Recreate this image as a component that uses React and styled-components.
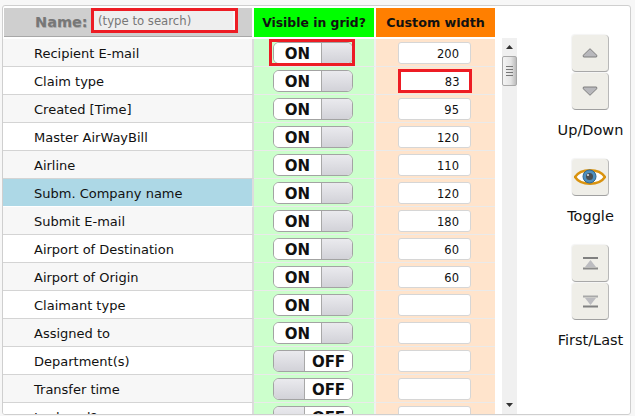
import React from "react";
import styled, { createGlobalStyle } from "styled-components";

const Global = createGlobalStyle`
  html, body { margin: 0; padding: 0; background: #fff; overflow: hidden; }
  body { font-family: "DejaVu Sans", Verdana, sans-serif; }
`;
const Page = styled.div`
  width: 635px; height: 416px; box-sizing: border-box; padding-top: 5px; overflow: hidden; background: #f7f7f7;
`;
const Panel = styled.div`
  width: 629px; height: 410px; margin-left: 2px; box-sizing: border-box;
  border: 1px solid #cfcfcf; border-radius: 3px; display: flex; overflow: hidden; background: #fff;
`;
const Main = styled.div`
  width: 492px; padding-top: 2px; flex: none;
`;
const HeaderRow = styled.div`
  display: grid; grid-template-columns: 248px 120px 119px; column-gap: 2px; height: 28px; margin: 0 0 3px 1px;
`;
const NameHead = styled.div`
  background: #cfcfcf; border-bottom: 1px solid #a8a8a8; box-sizing: border-box; display: flex; align-items: flex-start; padding-left: 31px;
`;
const NameLabel = styled.span`
  font: bold 14.5px/28px "DejaVu Sans", sans-serif; color: #777; text-shadow: 0.5px 0.5px 0 #aaa;
`;
const Search = styled.div`
  width: 147px; height: 25px; margin: 0 14px 0 auto; box-sizing: border-box; border: 3px solid #ed1c24; background: #eee;
  box-shadow: inset -2px 0 0 #f8f8f8;
  color: #777; font-size: 11.7px; line-height: 21px; padding-left: 4px;
`;
const ColHead = styled.div`
  background: ${p => p.$bg}; color: #111; font: bold ${p => p.$fs}/29px "DejaVu Sans", sans-serif; text-align: center;
`;
const Row = styled.div`
  display: grid; grid-template-columns: 251px 122px 119px; grid-template-rows: 28px; height: 28px; box-sizing: border-box;
`;
const NameCell = styled.div`
  background: ${p => p.$sel ? "#add8e6" : p.$alt ? "#f7f7f7" : "#fff"};
  border-bottom: 1px solid ${p => p.$sel ? "#fff" : "#d4d4d4"};
  border-right: 2px solid #dcdcdc; box-sizing: border-box;
  font-size: 13px; line-height: 25px; padding: 2px 0 0 31px; color: #111; white-space: nowrap;
`;
const ToggleCell = styled.div`
  background: #ccffcc; border-bottom: 1px solid #eaeaea; border-right: 2px solid #f0f0f0; box-sizing: border-box;
  display: flex; align-items: center; justify-content: center; padding-right: 2px;
`;
const WidthCell = styled.div`
  background: #ffe4cc; border-bottom: 1px solid #eaeaea; box-sizing: border-box;
  display: flex; align-items: center; justify-content: center; padding-right: 2px;
`;
const Switch = styled.div`
  position: relative; width: 80px; height: 22px; box-sizing: border-box; border: 1px solid #a3a3a3; border-radius: 6px;
  background: #fff; display: flex; flex-direction: ${p => p.$on ? "row" : "row-reverse"};
`;
const SwitchText = styled.div`
  width: 47px; text-align: center; font: bold 15px/22px "DejaVu Sans", sans-serif; color: #111; flex: none;
  height: 20px; background: #fff; border-radius: 5px;
`;
const SwitchKnob = styled.div`
  flex: 1; background: linear-gradient(#eaeaee, #d2d2d8);
  ${p => p.$on ? "border-left: 1px solid #a8a8a8; border-radius: 0 5px 5px 0;" : "border-right: 1px solid #a8a8a8; border-radius: 5px 0 0 5px;"}
`;
const Highlight = styled.div`
  position: absolute; left: -5px; top: -4px; width: 86px; height: 27px; box-sizing: border-box; border: 3px solid #ed1c24; pointer-events: none;
`;
const NumBox = styled.div`
  width: ${p => p.$hl ? "74px" : "73px"}; height: ${p => p.$hl ? "24px" : "22px"}; margin-top: ${p => p.$hl ? "1px" : 0}; box-sizing: border-box; background: #fff;
  border: ${p => p.$hl ? "3px solid #ed1c24" : "1px solid #d6d6d6"}; border-radius: ${p => p.$hl ? 0 : "3px"};
  font-size: 11.5px; line-height: ${p => p.$hl ? "20px" : "22px"}; text-align: right; padding-right: ${p => p.$hl ? "9px" : "11px"}; color: #111;
`;
const Scrollbar = styled.div`
  width: 15px; margin: 32px 0 0 7px; height: 376px; background: #f0f0f0; flex: none;
  display: flex; flex-direction: column; align-items: center;
`;
const ArrowBtn = styled.div`
  height: 18px; width: 100%; display: flex; align-items: center; justify-content: center; flex: none;
`;
const Thumb = styled.div`
  width: 15px; height: 30px; box-sizing: border-box; border: 1px solid #a9a9a9; border-radius: 2px;
  background: linear-gradient(90deg, #f4f4f4, #e4e4e4 60%, #bcbcbc); display: flex; flex-direction: column;
  align-items: center; justify-content: center; gap: 2px; flex: none;
`;
const Grip = styled.i`
  display: block; width: 7px; height: 1px; background: #777;
`;
const Track = styled.div`
  flex: 1;
`;
const Side = styled.div`
  flex: 1; display: flex; flex-direction: column; align-items: center; padding: 29px 0 0 34px;
`;
const BtnStack = styled.div`
  display: flex; flex-direction: column; gap: 1px;
`;
const ToolBtn = styled.div`
  width: 37px; height: 37px; box-sizing: border-box; background: #efeee8; border-radius: 4px;
  border-right: 1px solid #b8b8b8; border-bottom: 1px solid #a0a0a0;
  box-shadow: -1px -1px 1px #f4f4f4; display: flex; align-items: center; justify-content: center;
`;
const SideLabel = styled.div`
  font-size: 14.5px; color: #111; line-height: 16px; margin: 12px 0 21px; white-space: nowrap;
`;

const data = [
  ["Recipient E-mail", true, "200"], ["Claim type", true, "83"], ["Created [Time]", true, "95"],
  ["Master AirWayBill", true, "120"], ["Airline", true, "110"], ["Subm. Company name", true, "120"],
  ["Submit E-mail", true, "180"], ["Airport of Destination", true, "60"], ["Airport of Origin", true, "60"],
  ["Claimant type", true, ""], ["Assigned to", true, ""], ["Department(s)", false, ""],
  ["Transfer time", false, ""], ["Is closed?", false, ""],
];

const Up = () => <svg width="16" height="10" viewBox="0 0 16 10"><path d="M8 .7 15 7.5 14.5 9h-13L1 7.5Z" fill="#b8b8bc" stroke="#7e7e7e" strokeWidth="1" /></svg>;
const Down = () => <svg width="16" height="10" viewBox="0 0 16 10"><path d="M8 9.3 15 2.5 14.5 1h-13L1 2.5Z" fill="#b8b8bc" stroke="#7e7e7e" strokeWidth="1" /></svg>;
const First = () => <svg width="15" height="13" viewBox="0 0 15 13"><path d="M0 0H15V2H0Z" fill="#808080" /><path d="M7.5 3 13 10H2Z" fill="#bcbcc0" /><path d="M0 10.5H15V12.5H0Z" fill="#8a8a8a" /></svg>;
const Last = () => <svg width="15" height="13" viewBox="0 0 15 13"><path d="M0 .5H15V2.5H0Z" fill="#a8a8a8" /><path d="M7.5 10 13 3H2Z" fill="#bcbcc0" /><path d="M0 10.5H15V12.5H0Z" fill="#808080" /></svg>;
const Eye = () => (
  <svg width="32" height="20" viewBox="0 0 32 20">
    <path d="M1 10C7 1 25 1 31 10 25 19 7 19 1 10Z" fill="#fff" stroke="#d9930f" strokeWidth="2.4" />
    <circle cx="15.5" cy="9.5" r="6.5" fill="#4f8fbd" stroke="#2f6690" />
    <circle cx="15.5" cy="9.5" r="3.5" fill="#4a4f52" />
    <circle cx="14" cy="8" r="1.1" fill="#ddd" />
  </svg>
);

export default function App() {
  return (
    <Page>
      <Global />
      <Panel>
        <Main>
          <HeaderRow>
            <NameHead><NameLabel>Name:</NameLabel><Search>(type to search)</Search></NameHead>
            <ColHead $bg="#00ff00" $fs="12.4px">Visible in grid?</ColHead>
            <ColHead $bg="#ff7f00" $fs="12.7px">Custom width</ColHead>
          </HeaderRow>
          <div>
            {data.map(([name, on, w], i) => (
              <Row key={name}>
                <NameCell $alt={i % 2 === 0} $sel={name.startsWith("Subm.")}>{name}</NameCell>
                <ToggleCell>
                  <Switch $on={on}>
                    <SwitchText>{on ? "ON" : "OFF"}</SwitchText>
                    <SwitchKnob $on={on} />
                    {i === 0 && <Highlight />}
                  </Switch>
                </ToggleCell>
                <WidthCell><NumBox $hl={i === 1}>{w}</NumBox></WidthCell>
              </Row>
            ))}
          </div>
        </Main>
        <Scrollbar>
          <ArrowBtn><svg width="7" height="4"><path d="M3.5 0 7 4H0Z" fill="#333" /></svg></ArrowBtn>
          <Thumb><Grip /><Grip /><Grip /><Grip /></Thumb>
          <Track />
          <ArrowBtn><svg width="7" height="4"><path d="M0 0H7L3.5 4Z" fill="#333" /></svg></ArrowBtn>
        </Scrollbar>
        <Side>
          <BtnStack><ToolBtn><Up /></ToolBtn><ToolBtn><Down /></ToolBtn></BtnStack>
          <SideLabel>Up/Down</SideLabel>
          <ToolBtn><Eye /></ToolBtn>
          <SideLabel>Toggle</SideLabel>
          <BtnStack><ToolBtn><First /></ToolBtn><ToolBtn><Last /></ToolBtn></BtnStack>
          <SideLabel>First/Last</SideLabel>
        </Side>
      </Panel>
    </Page>
  );
}
